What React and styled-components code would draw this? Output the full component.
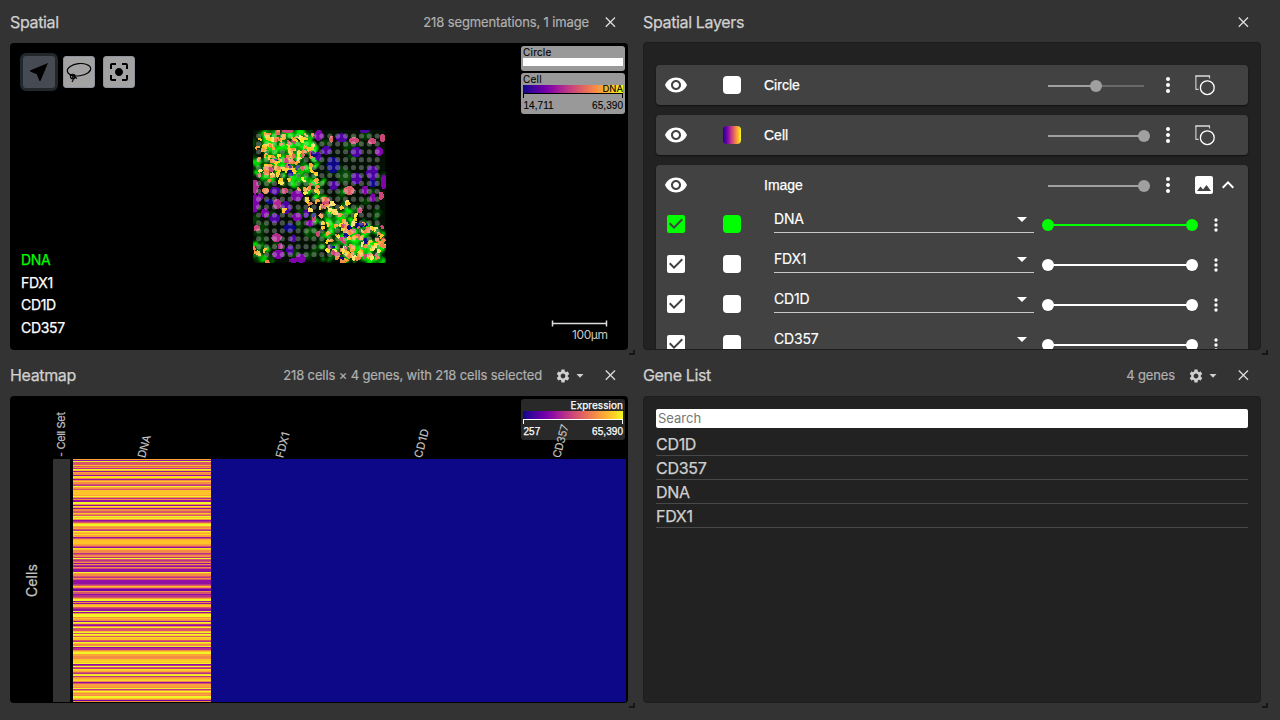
import React from 'react';
import styled, { createGlobalStyle } from 'styled-components';

const Global = createGlobalStyle`
  * { box-sizing: border-box; }
  body { margin: 0; background: #333; overflow: hidden; color: #d0d0d0; font-family: Inter, sans-serif; }
`;

const Page = styled.main`
  width: 1280px; height: 720px; padding-left: 10px; background: #333;
  display: grid; grid-template-columns: 618px 618px; grid-template-rows: 350px 353px; column-gap: 15px;
`;
const Panel = styled.section`position: relative; display: flex; flex-direction: column; min-height: 0;`;
const Head = styled.header`flex: 1; display: flex; align-items: center; padding: ${p => p.$top ?? 4}px 12px 0 0;`;
const Title = styled.h2`
  margin: 0 auto 0 0; font-size: 16px; font-weight: 400; line-height: 20px; letter-spacing: -0.35px;
  -webkit-text-stroke: 0.25px currentColor;
`;
const Info = styled.span`
  font-size: 13px; line-height: 18px; color: #b0b0b0; letter-spacing: -0.13px; -webkit-text-stroke: 0.2px currentColor;
`;
const Settings = styled.span`display: flex; align-items: center; margin: 1px 0 0 13px; gap: 5px; width: 29px;`;
const CloseIcon = styled.svg`width: 12px; height: 12px; margin-left: ${p => (p.$near ? '20px' : '15px')};`;
const Body = styled.div`
  position: relative; flex: none; height: ${p => (p.$tall ? 308 : 307)}px; overflow: hidden; border-radius: 4px;
  background: ${p => (p.$dark ? '#222' : '#000')}; border: ${p => (p.$dark ? '1px solid #1d1d1d' : '0')};
  padding: ${p => p.$pad || 0};
`;
const Handle = styled.i`
  position: absolute; right: -7px; bottom: -5px; width: 6px; height: 5px;
  border-right: 2px solid #161616; border-bottom: 2px solid #161616;
`;

const Close = ({ near }) => (
  <CloseIcon $near={near} viewBox="0 0 12 12"><path d="M1.8 1.5 11 10.7M11 1.5 1.8 10.7" stroke="#ddd" strokeWidth="1.3" /></CloseIcon>
);
const Gear = () => (
  <Settings>
    <svg width="16" height="16" viewBox="0 0 24 24" fill="#d0d0d0"><path d="M19.14 12.94c.04-.3.06-.61.06-.94 0-.32-.02-.64-.07-.94l2.03-1.58c.18-.14.23-.41.12-.61l-1.92-3.32c-.12-.22-.37-.29-.59-.22l-2.39.96c-.5-.38-1.03-.7-1.62-.94l-.36-2.54c-.04-.24-.24-.41-.48-.41h-3.84c-.24 0-.43.17-.47.41l-.36 2.54c-.59.24-1.13.57-1.62.94l-2.39-.96c-.22-.08-.47 0-.59.22L2.74 8.87c-.12.21-.08.47.12.61l2.03 1.58c-.05.3-.09.63-.09.94s.02.64.07.94l-2.03 1.58c-.18.14-.23.41-.12.61l1.92 3.32c.12.22.37.29.59.22l2.39-.96c.5.38 1.03.7 1.62.94l.36 2.54c.05.24.24.41.48.41h3.84c.24 0 .44-.17.47-.41l.36-2.54c.59-.24 1.13-.56 1.62-.94l2.39.96c.22.08.47 0 .59-.22l1.92-3.32c.12-.22.07-.47-.12-.61l-2.01-1.58zM12 15.6c-1.98 0-3.6-1.62-3.6-3.6s1.62-3.6 3.6-3.6 3.6 1.62 3.6 3.6-1.62 3.6-3.6 3.6z" /></svg>
    <svg width="8" height="4" viewBox="0 0 8 4"><path d="M.5 0h7L4 3.7z" fill="#d0d0d0" /></svg>
  </Settings>
);

/* ---------- spatial view ---------- */
const Scene = styled.svg`display: block;`;
const Tools = styled.div`position: absolute; left: 10px; top: 10px; display: flex; align-items: center;`;
const Tool = styled.button`
  display: grid; place-items: center; padding: 0; flex: none;
  width: ${p => (p.$on ? 38 : 32)}px; height: ${p => (p.$on ? 38 : 32)}px;
  margin-right: ${p => (p.$on ? 5 : 8)}px;
  border: ${p => (p.$on ? '3px solid #22272b' : '1px solid #8d929b')};
  border-radius: ${p => (p.$on ? 6 : 3)}px; background: ${p => (p.$on ? '#464b53' : '#a3a3a3')};
`;
const ChannelNames = styled.ul`
  position: absolute; left: 11px; top: 206px; margin: 0; padding: 0; list-style: none;
  font: 14px/22.6px Inter, sans-serif; color: #fff; letter-spacing: -0.3px;
`;
const ChannelName = styled.li`color: ${p => p.$color || '#fff'}; -webkit-text-stroke: 0.25px currentColor;`;
const Legends = styled.div`position: absolute; right: 3px; top: 3px; display: grid; gap: 2px;`;
const Legend = styled.div`
  width: 104px; height: ${p => (p.$short ? 25 : 41)}px; padding: 0 2px; border-radius: 3px;
  background: ${p => (p.$dark ? '#292929' : '#999')}; color: ${p => (p.$dark ? '#fff' : '#000')};
  font: 10px/12px Inter, sans-serif; -webkit-text-stroke: ${p => (p.$dark ? 0.25 : 0.1)}px currentColor;
`;
const LegendName = styled.div`height: 12px; text-align: ${p => (p.$end ? 'right' : 'left')}; letter-spacing: ${p => (p.$end ? 0.05 : 0.2)}px;`;
const plasma = '#0d0887,#41049d,#6a00a8,#8f0da4,#b12a90,#cc4778,#e16462,#f2844b,#fca636,#fcce25,#f0f921';
const Ramp = styled.div`
  height: 8px; text-align: right; line-height: 8px; font-size: 9.5px;
  background: ${p => (p.$plain ? '#fff' : `linear-gradient(90deg, ${plasma})`)};
`;
const Axis = styled.div`height: 5px; border: 1px solid currentColor; border-bottom: 0;`;
const Range = styled.div`
  display: flex; justify-content: space-between; margin-top: 2px; padding-left: 0.5px;
  font-family: "Liberation Sans", sans-serif; letter-spacing: 0.05px;
`;

function rng(seed) {
  let a = seed;
  return () => {
    a = (a + 0x6d2b79f5) | 0;
    let t = Math.imul(a ^ (a >>> 15), 1 | a);
    t = (t + Math.imul(t ^ (t >>> 7), 61 | t)) ^ t;
    return ((t ^ (t >>> 14)) >>> 0) / 4294967296;
  };
}
const P = '#7e03a8', I = '#4c02a1', N = '#0d0887', M = '#b12a90', R = '#de5f65', K = '#cc4778';
const bigCells = [
  [222, 40, 13, 17, P], [290, 48, 17, 14, I], [245, 85, 14, 14, I], [220, 103, 10, 14, I], [334, 90, 17, 16, I],
  [404, 89, 13, 14, P], [265, 130, 20, 25, N], [383, 153, 18, 22, I], [335, 170, 17, 18, I], [386, 185, 12, 12, N],
  [267, 190, 15, 14, I], [362, 205, 10, 14, P], [418, 180, 10, 22, P], [30, 195, 11, 22, M], [30, 245, 12, 28, P],
  [75, 240, 12, 8, N], [96, 247, 13, 15, M], [123, 258, 16, 20, I], [156, 222, 18, 17, P], [60, 274, 12, 14, P],
  [90, 290, 15, 15, I], [157, 286, 15, 13, P], [134, 318, 17, 13, N], [95, 348, 16, 13, M], [145, 352, 10, 11, I],
  [100, 398, 18, 14, P], [136, 386, 13, 14, I], [168, 410, 16, 14, P], [146, 417, 14, 7, P], [90, 207, 15, 12, I],
  [384, 228, 8, 13, P], [314, 206, 16, 14, R], [328, 56, 16, 10, K], [383, 58, 12, 9, K], [414, 48, 8, 13, K],
  [36, 320, 10, 9, K], [128, 28, 18, 6, K], [195, 305, 11, 10, P], [220, 337, 7, 9, K],
  [410, 222, 8, 12, K], [184, 276, 8, 14, I], [208, 288, 7, 12, K], [46, 225, 8, 12, P], [260, 52, 6, 10, R],
  [120, 207, 10, 9, K], [62, 207, 10, 9, '#f2844b'], [106, 374, 8, 9, M], [360, 28, 14, 6, I], [345, 266, 9, 9, K],
];
const rnd = rng(11);
const near = (x, y) => {
  const a = Math.exp(-(((x - 122) / 78) ** 6) - (((y - 92) / 84) ** 6));
  const b = Math.exp(-(((x - 340) / 94) ** 6) - (((y - 366) / 68) ** 6));
  const c = Math.exp(-(((x - 275) / 60) ** 2) - (((y - 268) / 34) ** 2)) * 0.6;
  const d = Math.exp(-(((x - 38) / 28) ** 2) - (((y - 395) / 34) ** 2)) * 0.7;
  const e = Math.exp(-(((x - 205) / 25) ** 2) - (((y - 195) / 40) ** 2)) * 0.5;
  return Math.min(1, a + b + c + d + e);
};
const warm = ['#fca636', '#fcce25', '#ffe36b', '#f2844b', '#f58b47', '#e16462', '#fde725', '#f7a83a', '#cc4778', '#fcce25', '#0d0887', '#fdc328', '#f68f46', '#ffdf60'];
const greens = [];
const smallCells = [];
for (let k = 0; k < 1500; k += 1) {
  const x = 24 + rnd() * 399, y = 24 + rnd() * 399, n = near(x, y), q = rnd(), r = rnd(), t = rnd();
  if (q < n * 0.8) greens.push([x, y, 4 + r * 8, 4 + t * 8, t > 0.45 ? '#00f000' : '#067a09', r * 180]);
  else if (q > 0.95) greens.push([x, y, 9 + r * 8, 9 + t * 8, '#043d06', 0]);
}
for (let k = 0; k < 1080; k += 1) {
  const x = 24 + rnd() * 399, y = 24 + rnd() * 399, q = rnd(), r = rnd(), t = rnd(), c = rnd();
  if (q < near(x, y) * 0.78) smallCells.push([x, y, 4 + r * 4, 4 + t * 4, warm[Math.floor(c * warm.length)], (t - 0.5) * 12, (r - 0.5) * 12]);
}
const Tissue = () => (
  <svg x="243" y="87" width="132.5" height="132.5" viewBox="24 24 399 399">
    <defs><filter id="soft"><feGaussianBlur stdDeviation="3" /></filter></defs>
    <rect x="24" y="24" width="399" height="399" fill="#041004" />
    <g filter="url(#soft)">
      <ellipse cx="300" cy="163" rx="22" ry="22" fill="#084c0b" /><ellipse cx="200" cy="333" rx="22" ry="16" fill="#096c0c" />
      <ellipse cx="62" cy="165" rx="20" ry="18" fill="#087c0b" />
      {greens.map(([x, y, a, b, c, r], i) => <ellipse key={i} cx={x} cy={y} rx={a} ry={b} fill={c} transform={`rotate(${r} ${x} ${y})`} />)}
    </g>
    <g shapeRendering="crispEdges">
      {bigCells.map(([x, y, a, b, c], i) => <ellipse key={i} cx={x} cy={y} rx={a} ry={b} fill={c} />)}
      {smallCells.map(([x, y, a, b, c, dx, dy], i) => (
        <g key={i} fill={c}><ellipse cx={x} cy={y} rx={a} ry={b} /><ellipse cx={x + dx} cy={y + dy} rx={b * 0.8} ry={a * 0.8} /></g>
      ))}
    </g>
    {Array.from({ length: 256 }, (_, i) => (
      <circle key={i} cx={41 + (i % 16) * 23.8} cy={42 + Math.floor(i / 16) * 23.8} r="7.8" fill="#e8e8e8" fillOpacity=".3" />
    ))}
  </svg>
);

/* ---------- heatmap ---------- */
const shades = {
  D: '#6f00a8', P: '#920fa3', M: '#b83289', R: '#d6556d', O: '#f58c46', A: '#fca338', G: '#fdc328', Y: '#f1f525', y: '#fada24',
};
const stripes = [
  'APYRRRGROM', 'YGPAOOPyyO', 'POGOORMYAO', 'RGGGGGAYOM', 'OPPYYOPyAP', 'OORRGORYGY', 'OPMRGYYAOA', 'RMYGAyAAPR',
  'AGGGGAORPy', 'GOOOMROOMY', 'RMROPOMPOR', 'PPPYAOORMO', 'RPPPPMRGOM', 'DDORRPMMRA', 'YYPOPAGGRM', 'PPYPOYYYOG',
  'AOPYGMPOYR', 'RRGYRYyRyG', 'GRMYGOOYPM', 'MOGYYAAOOO', 'GGyGYPMYRM', 'yGARMyYMOA', 'GyOPRAAAOY', 'MOYGOAOYYG', 'ODO',
].join('');
const HeatSvg = styled.svg`display: block; position: relative; font-family: Inter, sans-serif;`;
const Heat = () => (
  <HeatSvg width="618" height="307" viewBox="0 0 618 307">
    <rect x="43" y="63" width="17" height="243" fill="#333" />
    <g shapeRendering="crispEdges">
      <rect x="63" y="63" width="553" height="243" fill="#0d0887" />
      {stripes.split('').map((s, i) => <rect key={i} x="63" y={63 + i} width="138" height="1" fill={shades[s]} />)}
    </g>
    <g fill="#c4c4c4" fontSize="11" stroke="#c4c4c4" strokeWidth=".15">
      <text transform="translate(54.5 61) rotate(-90)" textLength="45">- Cell Set</text>
      <text transform="translate(135 62.5) rotate(-75)" textLength="23">DNA</text>
      <text transform="translate(273 62.5) rotate(-75)" textLength="26">FDX1</text>
      <text transform="translate(411.5 62.5) rotate(-75)" textLength="29.5">CD1D</text>
      <text transform="translate(550 62.5) rotate(-75)" textLength="34">CD357</text>
      <text transform="translate(26.5 201) rotate(-90)" fontSize="14" textLength="33" strokeWidth=".2">Cells</text>
    </g>
  </HeatSvg>
);

/* ---------- layer controller ---------- */
const Stack = styled.div`display: grid; gap: 10px; font: 14px/20px "Liberation Sans", sans-serif; color: #fff;`;
const Card = styled.div`background: #424242; border-radius: 4px; box-shadow: 0 1px 2px rgba(0,0,0,.55);`;
const Line = styled.div`height: 40px; display: flex; align-items: center;`;
const Lead = styled.span`width: 40px; display: grid; place-items: center;`;
const SwatchCell = styled.span`width: ${p => (p.$wide ? 78 : 68)}px; padding: 0 0 ${p => (p.$wide ? 2 : 0)}px 27px;`;
const Swatch = styled.i`display: block; width: 18px; height: 18px; border-radius: 4px; background: ${p => p.$fill};`;
const Name = styled.span`width: 284px; -webkit-text-stroke: 0.25px #fff;`;
const Track = styled.span`
  width: ${p => p.$w}px; height: 2px; margin-top: ${p => (p.$rest ? 2 : 0)}px; position: relative; background: ${p => p.$rest || p.$color};
`;
const Fill = styled.i`position: absolute; left: 0; top: 0; height: 2px; width: ${p => p.$to}%; background: #a0a0a0;`;
const Thumb = styled.i`
  position: absolute; top: -5px; left: calc(${p => p.$at}% - 6px); width: 12px; height: 12px; border-radius: 50%; background: ${p => p.$color};
`;
const More = styled.span`width: 48px; display: grid; place-items: center;`;
const Tail = styled.span`width: 24px; height: 24px; display: grid; place-items: center;`;
const Check = styled.span`
  width: 18px; height: 18px; border-radius: 2px; background: ${p => p.$color}; display: grid; place-items: center; margin-top: -2px;
`;
const Select = styled.span`
  width: 260px; height: 28px; margin: 0 14px 12px 0; padding-top: 1px; border-bottom: 1px solid #c8c8c8;
  display: flex; align-items: center; justify-content: space-between; font-family: Inter, sans-serif; letter-spacing: -0.2px;
  -webkit-text-stroke: 0.15px #fff;
`;
const Eye = () => (
  <Lead><svg width="24" height="24" viewBox="0 0 24 24" fill="#fff"><path d="M12 4.5C7 4.5 2.73 7.61 1 12c1.73 4.39 6 7.5 11 7.5s9.27-3.11 11-7.5c-1.73-4.39-6-7.5-11-7.5zM12 17c-2.76 0-5-2.24-5-5s2.24-5 5-5 5 2.24 5 5-2.24 5-5 5zm0-8c-1.66 0-3 1.34-3 3s1.34 3 3 3 3-1.34 3-3-1.34-3-3-3z" /></svg></Lead>
);
const Dots = ({ small }) => (
  <More>
    <svg width={small ? 20 : 24} height={small ? 20 : 24} viewBox="0 0 24 24" fill="#fff"><circle cx="12" cy="6" r="2" /><circle cx="12" cy="12" r="2" /><circle cx="12" cy="18" r="2" /></svg>
  </More>
);
const Opacity = ({ value }) => (
  <Track $w={96} $rest="#686868"><Fill $to={value} /><Thumb $at={value} $color="#a0a0a0" /></Track>
);
const Shape = () => (
  <Tail><svg width="24" height="24" viewBox="0 0 24 24" fill="none" stroke="#fff"><path d="M3.9 16.5V3M3.5 16.3h3.2M17.5 3v2.5" stroke="#ccc" strokeWidth="1.2" /><path d="M3.3 3h14.7" stroke="#ddd" strokeWidth="1.3" /><circle cx="15.3" cy="14.7" r="6.9" strokeWidth="1.3" /></svg></Tail>
);
const Layer = ({ name, fill, opacity }) => (
  <Card><Line><Eye /><SwatchCell><Swatch $fill={fill} /></SwatchCell><Name>{name}</Name><Opacity value={opacity} /><Dots /><Shape /></Line></Card>
);
const Channel = ({ name, color = '#fff' }) => (
  <Line>
    <Lead><Check $color={color}><svg width="18" height="18" viewBox="3 3 18 18"><path d="M10 17l-5-5 1.41-1.41L10 14.17l7.59-7.59L19 8l-9 9z" fill="#424242" /></svg></Check></Lead>
    <SwatchCell $wide><Swatch $fill={color} /></SwatchCell>
    <Select>{name}<svg width="24" height="24" viewBox="0 0 24 24"><path d="M7 10l5 5 5-5z" fill="#fff" /></svg></Select>
    <Track $w={144} $color={color}><Thumb $at={0} $color={color} /><Thumb $at={100} $color={color} /></Track>
    <Dots small />
  </Line>
);

/* ---------- gene list ---------- */
const Search = styled.input`
  display: block; width: 100%; height: 19px; padding: 0 2px 1px; border: 0; border-radius: 2px; background: #fff;
  font: 13px Inter, sans-serif; &::placeholder { color: #757575; opacity: 1; }
`;
const Gene = styled.div`
  height: 24px; padding-top: 1px; border-bottom: 1px solid #484848; font-size: 16px; line-height: 22px; letter-spacing: -0.3px;
  -webkit-text-stroke: 0.25px currentColor;
`;
const GeneList = styled.div`padding-top: 4px;`;

export default function App() {
  return (
    <>
      <Global />
      <Page>
        <Panel>
          <Head $top={1}><Title>Spatial</Title><Info>218 segmentations, 1 image</Info><Close /></Head>
          <Body>
            <Scene width="618" height="307" viewBox="0 0 618 307">
              <Tissue />
              <path d="M542 280.5h54M542.5 277.5v6M596.5 277.5v6" stroke="#ddd" strokeWidth="1.5" fill="none" />
              <text x="562" y="296" fontSize="12" fill="#c8c8c8" fontFamily="Inter, sans-serif" textLength="36">100µm</text>
            </Scene>
            <Tools>
              <Tool $on aria-label="Pan"><svg width="24" height="24" viewBox="0 0 24 24"><path d="M21 3 3 10.53v.98l6.84 2.65L12.48 21h.98L21 3z" /></svg></Tool>
              <Tool aria-label="Lasso"><svg width="28" height="28" viewBox="0 0 28 28" fill="none" stroke="#000" strokeWidth="1.1"><ellipse cx="14" cy="11.7" rx="11.8" ry="6.1" transform="rotate(-7 14 11.7)" /><circle cx="7.8" cy="18.6" r="2.3" /><path d="M4.5 17.2q2-1 5 1.8l2.5 1.5M7 18.5q2 1.5 1.2 3.5l-1.2 2" /></svg></Tool>
              <Tool aria-label="Recenter"><svg width="24" height="24" viewBox="0 0 24 24"><path d="M12 8c-2.21 0-4 1.79-4 4s1.79 4 4 4 4-1.79 4-4-1.79-4-4-4zm-7 7H3v4c0 1.1.9 2 2 2h4v-2H5v-4zM5 5h4V3H5c-1.1 0-2 .9-2 2v4h2V5zm14-2h-4v2h4v4h2V5c0-1.1-.9-2-2-2zm0 16h-4v2h4c1.1 0 2-.9 2-2v-4h-2v4z" /></svg></Tool>
            </Tools>
            <ChannelNames>
              <ChannelName $color="#0f0">DNA</ChannelName><ChannelName>FDX1</ChannelName><ChannelName>CD1D</ChannelName><ChannelName>CD357</ChannelName>
            </ChannelNames>
            <Legends>
              <Legend $short><LegendName>Circle</LegendName><Ramp $plain /></Legend>
              <Legend><LegendName>Cell</LegendName><Ramp>DNA</Ramp><Axis /><Range><span>14,711</span><span>65,390</span></Range></Legend>
            </Legends>
          </Body>
          <Handle />
        </Panel>

        <Panel>
          <Head $top={2}><Title>Spatial Layers</Title><Close /></Head>
          <Body $dark $tall $pad="22px 12px">
            <Stack>
              <Layer name="Circle" fill="#fff" opacity={50} />
              <Layer name="Cell" fill={`linear-gradient(90deg, ${plasma})`} opacity={100} />
              <Card>
                <Line>
                  <Eye /><SwatchCell /><Name>Image</Name><Opacity value={100} /><Dots />
                  <Tail><svg width="24" height="24" viewBox="0 0 24 24" fill="#fff"><path d="M21 19V5c0-1.1-.9-2-2-2H5c-1.1 0-2 .9-2 2v14c0 1.1.9 2 2 2h14c1.1 0 2-.9 2-2zM8.5 13.5l2.5 3.01L14.5 12l4.5 6H5l3.5-4.5z" /></svg></Tail>
                  <Tail><svg width="24" height="24" viewBox="0 0 24 24" fill="#fff"><path d="M12 8l-6 6 1.41 1.41L12 10.83l4.59 4.58L18 14z" /></svg></Tail>
                </Line>
                <Channel name="DNA" color="#0f0" /><Channel name="FDX1" /><Channel name="CD1D" /><Channel name="CD357" />
              </Card>
            </Stack>
          </Body>
          <Handle />
        </Panel>

        <Panel>
          <Head><Title>Heatmap</Title><Info>218 cells × 4 genes, with 218 cells selected</Info><Gear /><Close near /></Head>
          <Body>
            <Legends><Legend $dark><LegendName $end>Expression</LegendName><Ramp /><Axis /><Range><span>257</span><span>65,390</span></Range></Legend></Legends>
            <Heat />
          </Body>
          <Handle />
        </Panel>

        <Panel>
          <Head><Title>Gene List</Title><Info>4 genes</Info><Gear /><Close near /></Head>
          <Body $dark $pad="12px">
            <Search placeholder="Search" />
            <GeneList>{['CD1D', 'CD357', 'DNA', 'FDX1'].map(g => <Gene key={g}>{g}</Gene>)}</GeneList>
          </Body>
          <Handle />
        </Panel>
      </Page>
    </>
  );
}
